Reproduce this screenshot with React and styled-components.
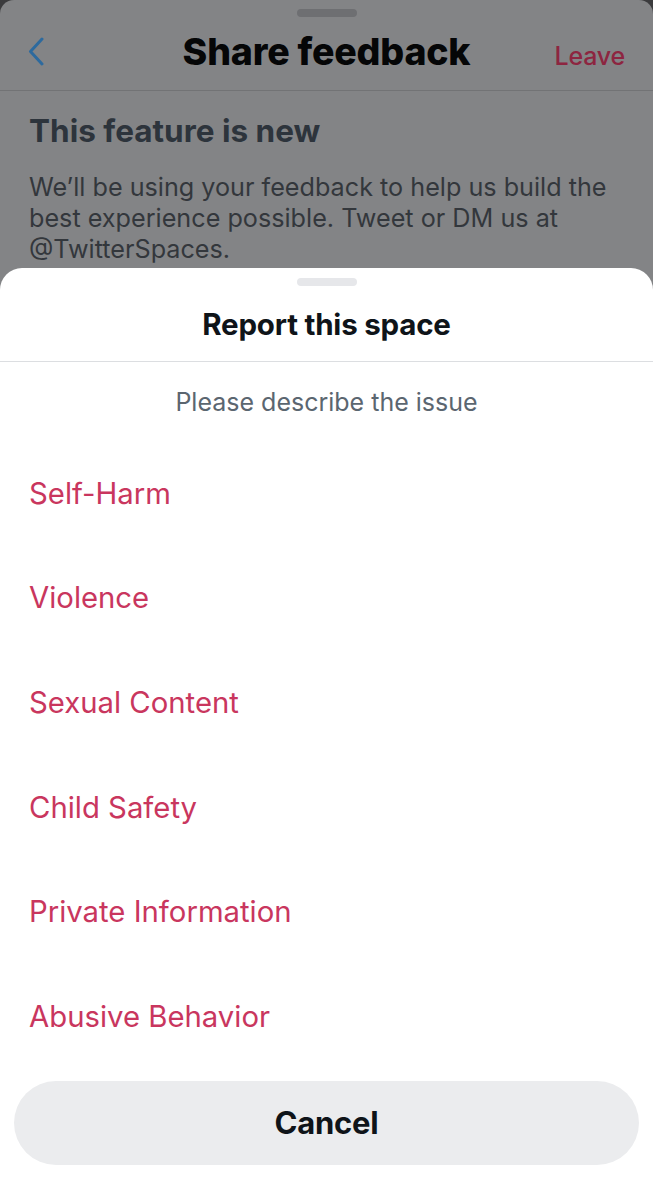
import React from "react";
import styled, { createGlobalStyle } from "styled-components";

const GlobalStyle = createGlobalStyle`
  * { box-sizing: border-box; }
  html, body {
    margin: 0;
    padding: 0;
    background: #3b3b3d;
    font-family: Inter, "Noto Sans", "Liberation Sans", sans-serif;
    -webkit-font-smoothing: antialiased;
  }
`;

const Screen = styled.div`
  /* Display & Box Model */
  width: 653px;
  height: 1200px;
  overflow: hidden;
  /* Styling */
  background: #3b3b3d;
`;

const Page = styled.div`
  /* Display & Box Model */
  display: flex;
  flex-direction: column;
  height: 100%;
  /* Styling */
  background: #838486;
  border-radius: 14px 14px 0 0;
`;

const Grabber = styled.div`
  /* Display & Box Model */
  width: ${props => props.width || "60px"};
  height: 8px;
  margin: ${props => props.margin || "0 auto"};
  flex-shrink: 0;
  /* Styling */
  background: ${props => props.color};
  border-radius: 4px;
`;

const TopBar = styled.div`
  /* Display & Box Model */
  display: grid;
  grid-template-columns: 120px 1fr 120px;
  align-items: center;
  height: 74px;
  padding: 0 28px 4px;
  /* Styling */
  border-bottom: 1px solid #727375;
`;

const Back = styled.div`
  display: flex;
  align-items: center;
`;

const Title = styled.h1`
  margin: 0;
  /* Styling */
  color: #050607;
  /* Text */
  font-size: 37.5px;
  font-weight: 800;
  letter-spacing: -0.2px;
  text-align: center;
  white-space: nowrap;
`;

const Leave = styled.span`
  justify-self: end;
  padding-top: 8px;
  /* Styling */
  color: #8d2540;
  /* Text */
  font-size: 25px;
  font-weight: 500;
  letter-spacing: -0.2px;
`;

const Intro = styled.div`
  /* Display & Box Model */
  height: 177px;
  padding: 21px 29px 0;
  overflow: hidden;
`;

const IntroTitle = styled.h2`
  margin: 0 0 22px;
  /* Styling */
  color: #2d343c;
  /* Text */
  font-size: 31.5px;
  font-weight: 700;
  line-height: 38px;
`;

const IntroText = styled.p`
  margin: 0;
  /* Styling */
  color: #33373c;
  /* Text */
  font-size: 25.2px;
  line-height: 31px;
`;

const Sheet = styled.div`
  /* Display & Box Model */
  display: flex;
  flex-direction: column;
  flex: 1;
  padding-top: 10px;
  /* Styling */
  background: #ffffff;
  border-radius: 22px 22px 0 0;
`;

const SheetTitle = styled.div`
  /* Display & Box Model */
  height: 76px;
  display: flex;
  align-items: center;
  justify-content: center;
  /* Styling */
  color: #0f1419;
  border-bottom: 1px solid #dcdee1;
  /* Text */
  font-size: 29.5px;
  font-weight: 700;
  letter-spacing: -0.2px;
`;

const Subtitle = styled.div`
  /* Display & Box Model */
  height: 79px;
  display: flex;
  align-items: center;
  justify-content: center;
  /* Styling */
  color: #5b6670;
  /* Text */
  font-size: 25px;
`;

const Options = styled.ul`
  margin: 0;
  padding: 0;
  list-style: none;
`;

const Option = styled.li`
  /* Display & Box Model */
  height: 104.6px;
  display: flex;
  align-items: center;
  padding: 0 29px;
  /* Styling */
  color: #c9365e;
  /* Text */
  font-size: 29.3px;
`;

const CancelButton = styled.button`
  /* Display & Box Model */
  width: 625px;
  height: 84px;
  margin: 12px 14px 0;
  padding: 0;
  /* Styling */
  background: #ebecee;
  border: none;
  border-radius: 42px;
  color: #0f1419;
  /* Text */
  font-family: inherit;
  font-size: 31px;
  font-weight: 700;
  letter-spacing: -0.2px;
`;

const issues = [
  "Self-Harm",
  "Violence",
  "Sexual Content",
  "Child Safety",
  "Private Information",
  "Abusive Behavior"
];

function App() {
  return (
    <Screen>
      <GlobalStyle />
      <Page>
        <Grabber color="#6e6f72" margin="9px auto 0" />
        <TopBar>
          <Back>
            <svg width="16" height="29" viewBox="0 0 16 29" fill="none">
              <path
                d="M14 2 L2.5 14.5 L14 27"
                stroke="#2d6a9e"
                strokeWidth="3"
                strokeLinecap="round"
                strokeLinejoin="round"
              />
            </svg>
          </Back>
          <Title>Share feedback</Title>
          <Leave>Leave</Leave>
        </TopBar>
        <Intro>
          <IntroTitle>This feature is new</IntroTitle>
          <IntroText>
            We’ll be using your feedback to help us build the best experience
            possible. Tweet or DM us at @TwitterSpaces.
          </IntroText>
        </Intro>
        <Sheet>
          <Grabber color="#e6e7ea" />
          <SheetTitle>Report this space</SheetTitle>
          <Subtitle>Please describe the issue</Subtitle>
          <Options>
            {issues.map(issue => (
              <Option key={issue}>{issue}</Option>
            ))}
          </Options>
          <CancelButton>Cancel</CancelButton>
        </Sheet>
      </Page>
    </Screen>
  );
}

export default App;
